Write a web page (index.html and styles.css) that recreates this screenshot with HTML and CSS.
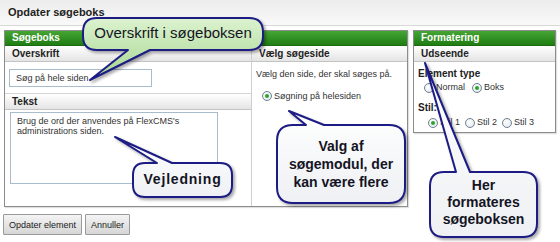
FILE: index.html
```html
<!DOCTYPE html>
<html lang="da">
<head>
<meta charset="utf-8">
<title>Opdater søgeboks</title>
<link rel="stylesheet" href="styles.css">
</head>
<body>
<div class="page">
  <div class="titlebar">Opdater søgeboks</div>
  <div class="main">
    <section class="panel panel-left">
      <div class="phead">Søgeboks</div>
      <div class="pbody">
        <div class="col1">
          <div class="sub">Overskrift</div>
          <div class="field"><div class="input">Søg på hele siden</div></div>
          <div class="sub sub-top">Tekst</div>
          <div class="field field-area"><div class="textarea">Brug de ord der anvendes på FlexCMS's administrations siden.</div></div>
        </div>
        <div class="col2">
          <div class="sub">Vælg søgeside</div>
          <p class="hint">Vælg den side, der skal søges på.</p>
          <label class="opt opt-page"><span class="radio on"></span>Søgning på helesiden</label>
        </div>
      </div>
    </section>
    <section class="panel panel-right">
      <div class="phead">Formatering</div>
      <div class="sub">Udseende</div>
      <div class="fmt">
        <div class="lbl">Element type</div>
        <div class="opts">
          <label class="opt"><span class="radio"></span>Normal</label>
          <label class="opt"><span class="radio on"></span>Boks</label>
        </div>
        <div class="lbl lbl-stil">Stil:</div>
        <div class="opts opts-stil">
          <label class="opt"><span class="radio on"></span>Stil 1</label>
          <label class="opt"><span class="radio"></span>Stil 2</label>
          <label class="opt"><span class="radio"></span>Stil 3</label>
        </div>
      </div>
    </section>
  </div>
  <div class="buttons">
    <button class="btn">Opdater element</button>
    <button class="btn">Annuller</button>
  </div>

  <svg class="callouts" width="560" height="242" viewBox="0 0 560 242">
    <defs>
      <linearGradient id="gGreen" x1="0" y1="0" x2="0" y2="1">
        <stop offset="0" stop-color="#dcf2cf"/>
        <stop offset="1" stop-color="#a6d690"/>
      </linearGradient>
      <linearGradient id="gWhite" x1="0" y1="0" x2="0" y2="1">
        <stop offset="0" stop-color="#ffffff"/>
        <stop offset="1" stop-color="#eef0f3"/>
      </linearGradient>
    </defs>
    <path class="bubble" fill="url(#gGreen)" d="M97,18 H249 Q263,18 263,32 V36 Q263,50 249,50 H150 L90,80 L128,50 H97 Q83,50 83,36 V32 Q83,18 97,18 Z"/>
    <path class="bubble" fill="url(#gWhite)" d="M145,163 H157 L115,137 L172,163 H220 Q232,163 232,175 V185 Q232,197 220,197 H145 Q133,197 133,185 V175 Q133,163 145,163 Z"/>
    <path class="bubble" fill="url(#gWhite)" d="M293,125 H306 L289,111 L324,125 H389 Q405,125 405,141 V187 Q405,203 389,203 H293 Q277,203 277,187 V141 Q277,125 293,125 Z"/>
    <path class="bubble" fill="url(#gWhite)" d="M444,172 H456 L425,63 L470,172 H523 Q537,172 537,186 V223 Q537,237 523,237 H444 Q430,237 430,223 V186 Q430,172 444,172 Z"/>
  </svg>
  <div class="ctext c1">Overskrift i søgeboksen</div>
  <div class="ctext c2">Vejledning</div>
  <div class="ctext c3">Valg af<br>søgemodul, der<br>kan være flere</div>
  <div class="ctext c4">Her<br>formateres<br>søgeboksen</div>
</div>
</body>
</html>
```

FILE: styles.css
```css
* { box-sizing: border-box; }
html, body { margin: 0; padding: 0; background: #fff; }
body { font-family: "Liberation Sans", Arial, sans-serif; font-size: 9px; color: #222; }
.page { position: relative; width: 560px; height: 242px; overflow: hidden; }

.titlebar {
  height: 26px; line-height: 25px; padding-left: 8px;
  font-weight: bold; font-size: 11px; color: #222;
  background: linear-gradient(#ececec, #f9f9f9);
  border-bottom: 1px solid #d8d8d8;
}

.main { display: flex; align-items: flex-start; gap: 5px; padding: 4px 0 0 4px; }

.panel { border: 1px solid #8c8c8c; background: #fff; box-shadow: 1px 1px 1px rgba(0,0,0,.12); }
.panel-left { width: 404px; height: 177px; display: flex; flex-direction: column; }
.panel-right { width: 143px; height: 103px; }

.phead {
  height: 15px; line-height: 14px; padding-left: 7px;
  color: #fff; font-weight: bold; font-size: 10px;
  background: linear-gradient(#45a534, #1f7d12);
  border-bottom: 1px solid #1a6a10;
}

.pbody { display: flex; flex: 1; }
.col1 { width: 246px; display: flex; flex-direction: column; }
.col2 { flex: 1; border-left: 1px solid #cfcfcf; }

.sub {
  height: 16px; line-height: 15px; padding-left: 7px;
  font-weight: bold; font-size: 10px; color: #222;
  background: linear-gradient(#ffffff, #e4e4e4);
  border-bottom: 1px solid #c4c4c4;
}
.sub-top { border-top: 1px solid #d4d4d4; height: 17px; }

.field { padding: 7px 0 0 4px; height: 31px; }
.input {
  width: 143px; height: 18px; line-height: 16px; padding-left: 6px;
  border: 1px solid #a9bccb; background: #fff; color: #333;
}
.field-area { padding: 2px 0 0 5px; height: auto; }
.textarea {
  width: 208px; height: 72px; padding: 3px 6px;
  border: 1px solid #a9bccb; line-height: 10px; color: #333;
}

.hint { margin: 7px 0 0 4px; color: #333; }
.opt { display: inline-flex; align-items: center; gap: 2px; color: #333; }
.opt-page { margin: 12px 0 0 10px; }

.radio {
  width: 10px; height: 10px; border-radius: 50%;
  border: 1px solid #6f7f92;
  background: radial-gradient(circle at 40% 40%, #ffffff, #dde3ea);
  display: inline-flex; align-items: center; justify-content: center;
}
.radio.on::after { content: ""; width: 4px; height: 4px; border-radius: 50%; background: #2aa52a; }

.fmt { padding: 6px 0 0 4px; }
.lbl { font-weight: bold; font-size: 10px; color: #222; line-height: 12px; height: 12px; }
.opts { display: flex; gap: 7px; padding-left: 6px; line-height: 11px; height: 11px; margin-top: 2px; }
.lbl-stil { margin-top: 9px; }
.opts-stil { padding-left: 10px; gap: 5px; margin-top: 3px; }

.buttons { display: flex; gap: 3px; padding: 7px 0 0 3px; }
.btn {
  height: 21px; padding: 0 5px; margin: 0;
  font-family: "Liberation Sans", Arial, sans-serif; font-size: 9px; color: #222;
  background: linear-gradient(#f4f4f4, #d6d6d6);
  border: 1px solid #9a9a9a; border-radius: 1px;
}

.callouts { position: absolute; left: 0; top: 0; pointer-events: none; }
.bubble { stroke: #1c1c84; stroke-width: 2; stroke-linejoin: round; filter: drop-shadow(2px 2px 1.5px rgba(0,0,0,.35)); }

.ctext {
  position: absolute; font-family: "Liberation Sans", Arial, sans-serif;
  color: #141424; text-align: center; font-size: 14px; line-height: 18px; font-weight: bold;
}
.c1 { left: 83px; top: 24px; width: 180px; font-weight: normal; font-size: 15px; }
.c2 { left: 133px; top: 170px; width: 99px; letter-spacing: 0.8px; }
.c3 { left: 277px; top: 137px; width: 128px; }
.c4 { left: 430px; top: 177px; width: 107px; line-height: 17px; }
```
